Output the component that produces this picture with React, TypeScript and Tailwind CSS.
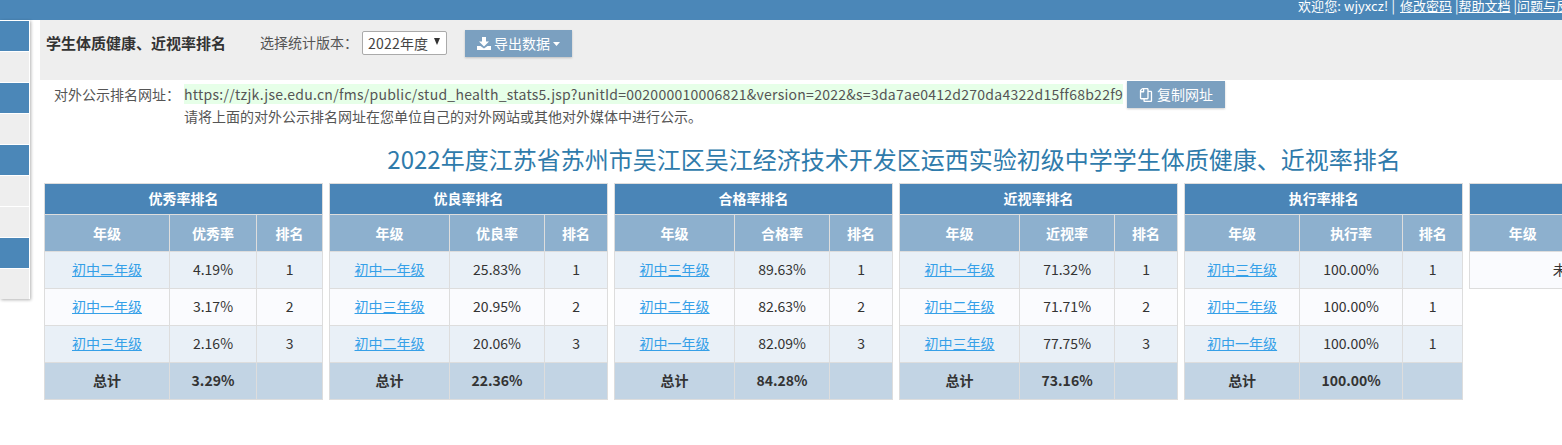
import { FaRegCopy } from "react-icons/fa";

const cjk = "font-['Noto_Sans_CJK_SC','Noto_Sans',sans-serif]";

type Row = { grade: string; rate: string; rank: string };

type Ranking = {
  title: string;
  label: string;
  cols: [number, number, number];
  rows: Row[];
  total: string;
};

const rankings: Ranking[] = [
  {
    title: "优秀率排名",
    label: "优秀率",
    cols: [125, 87, 66],
    rows: [
      { grade: "初中二年级", rate: "4.19%", rank: "1" },
      { grade: "初中一年级", rate: "3.17%", rank: "2" },
      { grade: "初中三年级", rate: "2.16%", rank: "3" },
    ],
    total: "3.29%",
  },
  {
    title: "优良率排名",
    label: "优良率",
    cols: [120, 95, 63],
    rows: [
      { grade: "初中一年级", rate: "25.83%", rank: "1" },
      { grade: "初中三年级", rate: "20.95%", rank: "2" },
      { grade: "初中二年级", rate: "20.06%", rank: "3" },
    ],
    total: "22.36%",
  },
  {
    title: "合格率排名",
    label: "合格率",
    cols: [120, 95, 63],
    rows: [
      { grade: "初中三年级", rate: "89.63%", rank: "1" },
      { grade: "初中二年级", rate: "82.63%", rank: "2" },
      { grade: "初中一年级", rate: "82.09%", rank: "3" },
    ],
    total: "84.28%",
  },
  {
    title: "近视率排名",
    label: "近视率",
    cols: [120, 95, 63],
    rows: [
      { grade: "初中一年级", rate: "71.32%", rank: "1" },
      { grade: "初中二年级", rate: "71.71%", rank: "2" },
      { grade: "初中三年级", rate: "77.75%", rank: "3" },
    ],
    total: "73.16%",
  },
  {
    title: "执行率排名",
    label: "执行率",
    cols: [115, 103, 60],
    rows: [
      { grade: "初中三年级", rate: "100.00%", rank: "1" },
      { grade: "初中二年级", rate: "100.00%", rank: "1" },
      { grade: "初中一年级", rate: "100.00%", rank: "1" },
    ],
    total: "100.00%",
  },
];

const tiles = [true, false, true, false, true, false, false, true, false];

function RankTable({ data }: { data: Ranking }) {
  const cell = "border border-[#dddddd] pb-[2px] text-center";
  const head = "border border-[#dddddd] text-center";
  return (
    <table className="w-[279px] shrink-0 table-fixed border-collapse text-[14px] text-[#333333]">
      <colgroup>
        {data.cols.map((w, i) => (
          <col key={i} style={{ width: w }} />
        ))}
      </colgroup>
      <thead>
        <tr className="h-[31px] bg-[#4a85b7] font-bold text-white">
          <th colSpan={3} className={cell}>
            {data.title}
          </th>
        </tr>
        <tr className="h-[37px] bg-[#8db0ce] font-bold text-white">
          <th className={head}>年级</th>
          <th className={head}>{data.label}</th>
          <th className={head}>排名</th>
        </tr>
      </thead>
      <tbody>
        {data.rows.map((row, i) => (
          <tr key={i} className={i % 2 === 0 ? "h-[37px] bg-[#e9f0f7]" : "h-[37px] bg-[#fafbfe]"}>
            <td className={cell}>
              <a className="text-[#35a0e8] underline">{row.grade}</a>
            </td>
            <td className={cell}>{row.rate}</td>
            <td className={cell}>{row.rank}</td>
          </tr>
        ))}
        <tr className="h-[37px] bg-[#c2d4e4] font-bold">
          <td className={cell}>总计</td>
          <td className={cell}>{data.total}</td>
          <td className={cell}></td>
        </tr>
      </tbody>
    </table>
  );
}

export default function App() {
  return (
    <div className={`h-[445px] w-[1562px] overflow-hidden bg-white ${cjk}`}>
      <header className="flex h-5 justify-end overflow-hidden whitespace-nowrap bg-[#4b87b8] text-[13px] leading-[11px] text-white">
        <div className="h-5 w-[264px] shrink-0 overflow-hidden">
          <span className="tracking-[0.1px]">欢迎您: wjyxcz! | </span>
          <a className="ml-[2px] underline">修改密码</a>
          <span className="ml-[3px]">|</span>
          <a className="underline">帮助文档</a>
          <span className="ml-[3px]">|</span>
          <a className="underline">问题与反馈</a>
        </div>
      </header>

      <div className="flex">
        <aside className="flex h-[279px] w-[30px] shrink-0 flex-col gap-px bg-white pr-px pt-px shadow-[1px_1px_3px_rgba(0,0,0,0.3)]">
          {tiles.map((blue, i) => (
            <div key={i} className={blue ? "h-[30px] bg-[#4b87b8]" : "h-[30px] bg-[#eeeeee]"} />
          ))}
        </aside>

        <main className="ml-[10px] w-[1708px] min-w-0 shrink-0">
          <div className="flex h-[60px] items-start bg-[#eeeeee] pl-[6px] pt-[10px]">
            <b className="mt-[3px] text-[15px] leading-[20px] text-[#333333]">学生体质健康、近视率排名</b>
            <span className="ml-[34px] mt-[2px] text-[14px] leading-[20px] text-[#555555]">选择统计版本：</span>
            <div className="ml-[4px] mt-px flex h-[24px] w-[85px] items-center justify-between rounded-[2px] border border-[#aaaaaa] bg-white pl-[5px] pr-[6px] text-[14px] tracking-[0.2px] text-[#444444]">
              2022年度
              <svg width="6" height="7" viewBox="0 0 6 7" className="mb-[3px]">
                <path d="M0 0h6L3 7z" fill="#333333" />
              </svg>
            </div>
            <button className="ml-[18px] flex h-[27px] w-[107px] items-center justify-center gap-[3px] bg-[#7ba0c0] text-[14px] text-white shadow-[0_1px_2px_rgba(0,0,0,0.2)]">
              <svg width="14" height="13" viewBox="0 0 14 13" fill="#ffffff">
                <path d="M5 0h4v4.500h3L7 9.500 2 4.500h3z" />
                <path d="M0 9h3.500L7 11.500 10.500 9H14v4H0z" />
              </svg>
              导出数据
              <svg width="7" height="4" viewBox="0 0 7 4">
                <path d="M0 0h7L3.500 4z" fill="#ffffff" />
              </svg>
            </button>
          </div>

          <div className="flex pt-px text-[14px] leading-[27px] text-[#555555]">
            <span className="ml-[14px] w-[130px] shrink-0">对外公示排名网址：</span>
            <div>
              <div className="flex items-start">
                <span className="mt-[3px] h-[20px] whitespace-nowrap bg-[#e6ffe8] leading-[20px] tracking-[0.26px]">
                  https://tzjk.jse.edu.cn/fms/public/stud_health_stats5.jsp?unitId=002000010006821&version=2022&s=3da7ae0412d270da4322d15ff68b22f9
                </span>
                <button className="ml-[4px] flex h-[27px] w-[98px] items-center justify-center gap-[4px] bg-[#7ba0c0] text-white shadow-[0_1px_2px_rgba(0,0,0,0.2)]">
                  <FaRegCopy size={14} className="-scale-x-100" />
                  复制网址
                </button>
              </div>
              <p className="mt-[-3px] leading-[22px]">请将上面的对外公示排名网址在您单位自己的对外网站或其他对外媒体中进行公示。</p>
            </div>
          </div>

          <h1 className="mt-[15px] text-center text-[24px] leading-[34px] text-[#2f7bab]">
            2022年度江苏省苏州市吴江区吴江经济技术开发区运西实验初级中学学生体质健康、近视率排名
          </h1>

          <div className="ml-[4px] mt-[7px] flex items-start gap-[6px]">
            {rankings.map((r) => (
              <RankTable key={r.title} data={r} />
            ))}
            <table className="w-[279px] shrink-0 table-fixed border-collapse text-[14px] text-[#333333]">
              <colgroup>
                <col style={{ width: 106 }} />
                <col />
              </colgroup>
              <tbody>
                <tr className="h-[31px] bg-[#4a85b7]">
                  <th colSpan={2} className="border border-[#dddddd]"></th>
                </tr>
                <tr className="h-[37px] bg-[#8db0ce] font-bold text-white">
                  <th className="border border-[#dddddd]">年级</th>
                  <th className="border border-[#dddddd]"></th>
                </tr>
                <tr className="h-[37px] bg-[#fafbfe]">
                  <td colSpan={2} className="border border-[#dddddd] pb-[2px] text-center">
                    未上报年级数据。
                  </td>
                </tr>
              </tbody>
            </table>
          </div>
        </main>
      </div>
    </div>
  );
}
